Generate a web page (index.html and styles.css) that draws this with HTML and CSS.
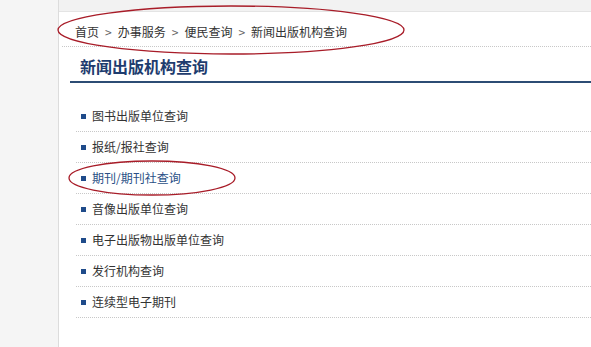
FILE: index.html
```html
<!DOCTYPE html>
<html lang="zh-CN">
  <head>
    <meta charset="utf-8" />
    <title>新闻出版机构查询</title>
    <link rel="stylesheet" href="styles.css">
  </head>
  <body>
    <div class="side"></div>
    <div class="main">
      <div class="topbar"></div>
      <div class="crumbs">
        <span>首页</span><span class="sep">&gt;</span><span>办事服务</span><span class="sep">&gt;</span><span>便民查询</span><span class="sep">&gt;</span><span>新闻出版机构查询</span>
      </div>
      <h2 class="title">新闻出版机构查询</h2>
      <ul class="list">
        <li>图书出版单位查询</li>
        <li>报纸/报社查询</li>
        <li class="active">期刊/期刊社查询</li>
        <li>音像出版单位查询</li>
        <li>电子出版物出版单位查询</li>
        <li>发行机构查询</li>
        <li>连续型电子期刊</li>
      </ul>
    </div>

    <!-- hand-drawn marks over the page -->
    <svg class="marks" width="591" height="347" viewBox="0 0 591 347">
      <ellipse cx="231" cy="30" rx="173" ry="24" />
      <ellipse cx="152" cy="178" rx="83" ry="17" />
    </svg>
  </body>
</html>
```

FILE: styles.css
```css
body {
  margin: 0;
  display: flex;
  min-height: 347px;
  background: #fff;
  color: #333;
  font-family: "Noto Sans CJK SC", "DejaVu Sans", sans-serif;
  font-size: 12px;
  overflow: hidden;
}

.side {
  width: 58px;
  flex: none;
  background: #f5f5f5;
  border-right: 1px solid #dcdcdc;
}

.main {
  flex: 1;
}

.topbar {
  height: 11px;
  background: #f2f2f2;
  border-bottom: 1px solid #e4e4e4;
}

.crumbs {
  margin-left: 3px;
  padding: 12px 0 0 13px;
  height: 22px;
  line-height: 16px;
  border-bottom: 1px dotted #c8c8c8;
}

.crumbs .sep {
  color: #666;
  margin: 0 6px;
}

.title {
  margin: 0 0 0 11px;
  padding: 9px 0 0 10px;
  height: 25px;
  font-size: 16px;
  line-height: 20px;
  font-weight: bold;
  color: #1e3c6e;
  border-bottom: 2px solid #2c4c74;
}

.list {
  list-style: none;
  margin: 18px 0 0 17px;
  padding: 0;
}

.list li {
  height: 30px;
  line-height: 30px;
  padding-left: 16px;
  border-bottom: 1px dotted #c8c8c8;
  position: relative;
}

.list li::before {
  content: "";
  position: absolute;
  left: 5px;
  top: 13px;
  width: 5px;
  height: 5px;
  background: #1f4b8a;
}

.list li.active {
  color: #2a5086;
}

.marks {
  position: absolute;
  left: 0;
  top: 0;
  pointer-events: none;
}

.marks ellipse {
  fill: none;
  stroke: #a81c28;
  stroke-width: 1.3;
}
```
